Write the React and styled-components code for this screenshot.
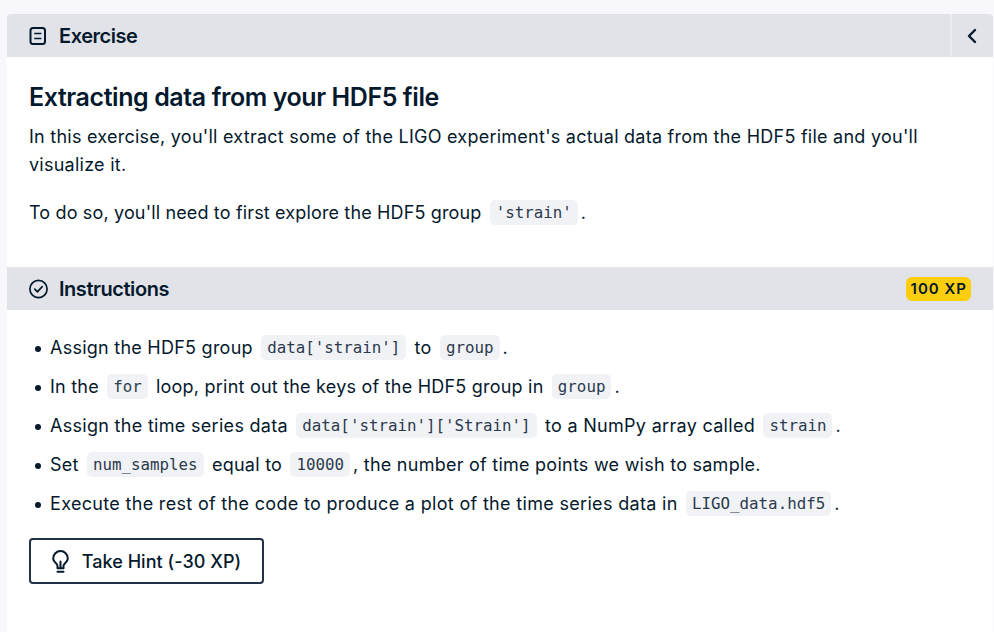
import React from "react";
import styled, { createGlobalStyle } from "styled-components";

const GlobalStyle = createGlobalStyle`
  html, body {
    margin: 0;
    height: 100%;
    background: #f7f7fc;
    overflow: hidden;
  }
  body {
    font-family: "Inter", "Noto Sans", sans-serif;
    color: #05192d;
  }
`;

const Page = styled.div`
  padding: 14px 1px 0 7px;
`;

const Panel = styled.div`
  background: #fff;
  border-radius: 4px 4px 0 0;
  overflow: hidden;
  height: 618px;
`;

const SectionBar = styled.div`
  display: flex;
  align-items: center;
  height: 43px;
  background: #e1e3e8;
  padding-left: 22px;
`;

const BarTitle = styled.h5`
  flex: 1;
  margin: 0 0 0 11px;
  font-size: 20px;
  font-weight: 600;
  letter-spacing: -0.45px;
`;

const CollapseButton = styled.button`
  display: flex;
  align-items: center;
  justify-content: center;
  width: 43px;
  height: 43px;
  padding: 0 2px 0 0;
  background: transparent;
  border: 0;
  border-left: 2px solid #e9ebef;
  color: #05192d;
`;

const XpBadge = styled.span`
  margin-right: 22px;
  padding: 0 4px 0 5px;
  height: 24px;
  line-height: 24px;
  background: #fcce0d;
  border-radius: 6px;
  font-size: 15px;
  font-weight: 600;
  letter-spacing: 1px;
`;

const Exercise = styled.section`
  padding: 22px 22px 0;
  height: 188px;
`;

const Heading = styled.h1`
  margin: 0 0 8px;
  font-size: 25px;
  line-height: 36px;
  font-weight: 600;
  letter-spacing: -0.42px;
`;

const Para = styled.p`
  margin: 0 0 ${(props) => props.$gap || 19}px;
  font-size: 18px;
  line-height: 28px;
  letter-spacing: ${(props) => props.$tracking ?? 0.25}px;
`;

const Instructions = styled.section`
  padding: 18px 22px 0;
`;

const Bullets = styled.ul`
  margin: 0 0 15px;
  padding: 0 0 0 21px;
  list-style: none;
`;

const Bullet = styled.li`
  font-size: 18px;
  line-height: 39px;
  letter-spacing: ${(props) => props.$tracking ?? 0.25}px;

  &::before {
    content: "";
    display: inline-block;
    width: 6px;
    height: 6px;
    margin: 0 9px 2px -15px;
    border-radius: 50%;
    background: #05192d;
  }
`;

const Code = styled.code`
  display: inline-block;
  margin: 0 3px;
  padding: 0 6px;
  height: 25px;
  line-height: 26px;
  vertical-align: 1px;
  background: #f1f2f6;
  border-radius: 5px;
  font-family: "DejaVu Sans Mono", monospace;
  font-size: 15.8px;
  letter-spacing: 0;
  color: #2b3a4c;
`;

const HintButton = styled.button`
  display: flex;
  align-items: center;
  justify-content: center;
  gap: 13px;
  width: 235px;
  height: 46px;
  padding: 0;
  background: #fff;
  border: 2px solid #213147;
  border-radius: 4px;
  font-family: inherit;
  font-size: 18px;
  font-weight: 500;
  letter-spacing: 0.05px;
  color: #05192d;
`;

const ExerciseIcon = () => (
  <svg width="19" height="18" viewBox="0 0 19 18" fill="none" stroke="#05192d" strokeWidth="2">
    <rect x="1.5" y="1" width="14.5" height="16" rx="2.5" />
    <path d="M5.2 6.5h7.2M5.2 11.5h7.2" strokeWidth="1.6" />
  </svg>
);

const CheckIcon = () => (
  <svg width="19" height="20" viewBox="0 0 19 20" fill="none" stroke="#05192d" strokeWidth="1.7">
    <circle cx="9.5" cy="10" r="8.6" />
    <path d="M5.8 10.2l2.6 2.6 4.8-5.2" strokeLinecap="round" strokeLinejoin="round" />
  </svg>
);

const ChevronIcon = () => (
  <svg width="12" height="16" viewBox="0 0 12 16" fill="none" stroke="#05192d" strokeWidth="2.4">
    <path d="M9 2L3 8l6 6" strokeLinecap="round" strokeLinejoin="round" />
  </svg>
);

const BulbIcon = () => (
  <svg width="17" height="23" viewBox="0 0 17 23" fill="none" stroke="#05192d" strokeWidth="2">
    <path d="M5.5 18.2v-2.4C5.5 13.4 1.2 12.2 1.2 8.4a7.3 7.3 0 0114.6 0c0 3.8-4.3 5-4.3 7.4v2.4z" strokeLinejoin="round" />
    <path d="M8.5 18v-6.5M5.5 21.8h6" strokeLinecap="round" />
  </svg>
);

const App = () => (
  <>
    <GlobalStyle />
    <Page>
      <Panel>
        <SectionBar>
          <ExerciseIcon />
          <BarTitle>Exercise</BarTitle>
          <CollapseButton>
            <ChevronIcon />
          </CollapseButton>
        </SectionBar>
        <Exercise>
          <Heading>Extracting data from your HDF5 file</Heading>
          <Para $gap={20}>
            In this exercise, you'll extract some of the LIGO experiment's actual data from the HDF5 file and you'll visualize it.
          </Para>
          <Para $tracking={0.15}>
            To do so, you'll need to first explore the HDF5 group <Code>'strain'</Code>.
          </Para>
        </Exercise>
        <SectionBar>
          <CheckIcon />
          <BarTitle>Instructions</BarTitle>
          <XpBadge>100 XP</XpBadge>
        </SectionBar>
        <Instructions>
          <Bullets>
            <Bullet>Assign the HDF5 group <Code>data['strain']</Code> to <Code>group</Code>.</Bullet>
            <Bullet $tracking={0.22}>In the <Code>for</Code> loop, print out the keys of the HDF5 group in <Code>group</Code>.</Bullet>
            <Bullet $tracking={0.3}>Assign the time series data <Code>data['strain']['Strain']</Code> to a NumPy array called <Code>strain</Code>.</Bullet>
            <Bullet>Set <Code>num_samples</Code> equal to <Code>10000</Code>, the number of time points we wish to sample.</Bullet>
            <Bullet $tracking={0.32}>Execute the rest of the code to produce a plot of the time series data in <Code>LIGO_data.hdf5</Code>.</Bullet>
          </Bullets>
          <HintButton>
            <BulbIcon />
            Take Hint (-30 XP)
          </HintButton>
        </Instructions>
      </Panel>
    </Page>
  </>
);

export default App;
